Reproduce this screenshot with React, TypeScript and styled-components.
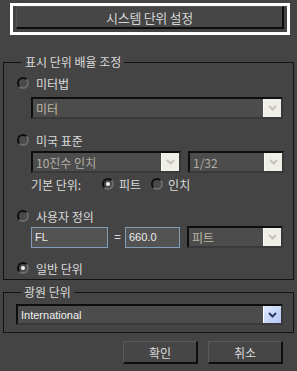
import React from 'react'
import styled, { createGlobalStyle } from 'styled-components'

const GlobalStyle = createGlobalStyle`
  html, body {
    margin: 0;
    padding: 0;
    background: #444444;
  }
  body {
    font-family: "Noto Sans CJK KR", "Liberation Sans", sans-serif;
    font-size: 12px;
    color: #dadada;
  }
`

type SelectProps = {
  value: string
  width?: number
  tone?: 'beige' | 'muted' | 'light'
  active?: boolean
}

const Select: React.FC<SelectProps> = ({ value, width, tone = 'muted', active }) => (
  <SelectBox $width={width}>
    <SelectText $tone={tone}>{value}</SelectText>
    <ArrowButton $active={active}>
      <svg width="9" height="6" viewBox="0 0 9 6">
        <path
          d="M1 1 L4.5 4.5 L8 1"
          fill="none"
          stroke={active ? '#2b3a66' : '#c4c4bc'}
          strokeWidth="2"
        />
      </svg>
    </ArrowButton>
  </SelectBox>
)

const RadioOption: React.FC<{ checked?: boolean; children: React.ReactNode }> = ({
  checked,
  children,
}) => (
  <RadioRow>
    <Radio $checked={checked} />
    <span>{children}</span>
  </RadioRow>
)

const App: React.FC = () => {
  return (
    <Page>
      <GlobalStyle />
      <TopFrame>
        <TopButton>시스템 단위 설정</TopButton>
      </TopFrame>

      <Group>
        <Legend>표시 단위 배율 조정</Legend>

        <RadioOption>미터법</RadioOption>
        <Indent $top={5}>
          <Select value="미터" tone="beige" />
        </Indent>

        <Spacer $h={12} />
        <RadioOption>미국 표준</RadioOption>
        <Indent $top={2}>
          <Select value="10진수 인치" width={150} />
          <Select value="1/32" width={96} />
        </Indent>
        <BaseUnitRow>
          <span>기본 단위:</span>
          <InlineRadio>
            <Radio $checked />
            <span>피트</span>
          </InlineRadio>
          <InlineRadio>
            <Radio />
            <span>인치</span>
          </InlineRadio>
        </BaseUnitRow>

        <Spacer $h={14} />
        <RadioOption>사용자 정의</RadioOption>
        <Indent $top={1}>
          <Edit $width={77}>FL</Edit>
          <Equals>=</Equals>
          <Edit $width={55}>660.0</Edit>
          <Select value="피트" width={96} tone="beige" />
        </Indent>

        <Spacer $h={11} />
        <RadioOption checked>일반 단위</RadioOption>
      </Group>

      <LightGroup>
        <Legend>광원 단위</Legend>
        <LightRow>
          <Select value="International" tone="light" active />
        </LightRow>
      </LightGroup>

      <Footer>
        <DialogButton>확인</DialogButton>
        <DialogButton>취소</DialogButton>
      </Footer>
    </Page>
  )
}

export default App

const Page = styled.div`
  width: 297px;
  height: 371px;
  box-sizing: border-box;
  display: flex;
  flex-direction: column;
  overflow: hidden;
`

const TopFrame = styled.div`
  margin: 3px 0 0 10px;
  width: 280px;
  height: 32px;
  box-sizing: border-box;
  border: 3px solid #ffffff;
  padding: 0 3px;
`

const TopButton = styled.div`
  height: 23px;
  box-sizing: border-box;
  border-top: 1px solid #555555;
  border-left: 1px solid #555555;
  border-right: 2px solid #0c0c0c;
  border-bottom: 2px solid #0c0c0c;
  background: #464646;
  display: flex;
  align-items: center;
  justify-content: center;
  font-size: 13px;
  color: #d4d4d4;
  letter-spacing: -0.3px;
`

const Group = styled.fieldset`
  margin: 19px 0 0 3px;
  width: 291px;
  box-sizing: border-box;
  border: 1px solid #121212;
  padding: 0 10px 2px 13px;
  display: flex;
  flex-direction: column;
  min-width: 0;
`

const LightGroup = styled(Group)`
  margin-top: 4px;
  padding: 0 10px 7px 12px;
`

const Legend = styled.legend`
  margin-left: 5px;
  padding: 0 3px;
  height: 16px;
  line-height: 16px;
  color: #dadada;
`

const Spacer = styled.div<{ $h: number }>`
  height: ${(p) => p.$h}px;
  flex: none;
`

const RadioRow = styled.div`
  margin-top: 4px;
  height: 18px;
  display: flex;
  align-items: center;
  gap: 7px;
  ${Spacer} + & {
    margin-top: 0;
  }
`

const Radio = styled.span<{ $checked?: boolean }>`
  position: relative;
  width: 12px;
  height: 12px;
  box-sizing: border-box;
  border-radius: 50%;
  border: 2px solid;
  border-color: #0e0e0e #6a6a6a #6a6a6a #0e0e0e;
  background: #4a4a4a;
  flex: none;

  &::after {
    content: '';
    display: ${(p) => (p.$checked ? 'block' : 'none')};
    position: absolute;
    left: 2px;
    top: 2px;
    width: 4px;
    height: 4px;
    border-radius: 50%;
    background: #f4f4f4;
  }
`

const Indent = styled.div<{ $top: number }>`
  margin: ${(p) => p.$top}px 0 0 14px;
  display: flex;
  align-items: center;
  gap: 7px;
`

const SelectBox = styled.div<{ $width?: number }>`
  ${(p) => (p.$width ? `width: ${p.$width}px; flex: none;` : 'flex: 1;')}
  height: 22px;
  box-sizing: border-box;
  border-top: 2px solid #0e0e0e;
  border-left: 2px solid #0e0e0e;
  border-right: 2px solid #393939;
  border-bottom: 2px solid #393939;
  background: #4c4c4c;
  display: flex;
  align-items: stretch;
`

const toneColors = {
  beige: '#bdb7a4',
  muted: '#b0ada4',
  light: '#f0f0f0',
}

const SelectText = styled.span<{ $tone: 'beige' | 'muted' | 'light' }>`
  flex: 1;
  padding-left: 3px;
  display: flex;
  align-items: center;
  color: ${(p) => toneColors[p.$tone]};
  font-family: ${(p) =>
    p.$tone === 'light' ? '"Liberation Sans", "Noto Sans CJK KR", sans-serif' : 'inherit'};
  font-size: ${(p) => (p.$tone === 'light' ? '11px' : '12px')};
  white-space: nowrap;
  overflow: hidden;
`

const ArrowButton = styled.span<{ $active?: boolean }>`
  width: 17px;
  flex: none;
  display: flex;
  align-items: center;
  justify-content: center;
  background: ${(p) =>
    p.$active ? 'linear-gradient(135deg, #dfe8ff, #b4c8f4)' : '#efefe8'};
  border-left: 1px solid ${(p) => (p.$active ? '#ffffff' : '#fbfbf6')};
`

const BaseUnitRow = styled.div`
  margin: 2px 0 0 14px;
  height: 18px;
  display: flex;
  align-items: center;

  & > span:first-child {
    width: 71px;
  }
`

const InlineRadio = styled.div`
  display: flex;
  align-items: center;
  gap: 5px;
  margin-right: 10px;
`

const Edit = styled.div<{ $width: number }>`
  width: ${(p) => p.$width}px;
  height: 21px;
  box-sizing: border-box;
  flex: none;
  border: 1px solid #7f9db9;
  background: #535353;
  color: #ececec;
  font-family: "Liberation Sans", sans-serif;
  font-size: 11px;
  padding-left: 3px;
  display: flex;
  align-items: center;
`

const Equals = styled.span`
  width: 5px;
  margin: 0 -1px;
  text-align: center;
  font-family: "Liberation Sans", sans-serif;
`

const LightRow = styled.div`
  margin-top: 4px;
  display: flex;

  & > div {
    height: 21px;
  }
`

const Footer = styled.div`
  margin-top: 8px;
  padding-right: 14px;
  display: flex;
  justify-content: flex-end;
  gap: 10px;
`

const DialogButton = styled.div`
  width: 75px;
  height: 23px;
  box-sizing: border-box;
  border-top: 1px solid #5a5a5a;
  border-left: 1px solid #5a5a5a;
  border-right: 2px solid #0e0e0e;
  border-bottom: 2px solid #0e0e0e;
  background: #464646;
  display: flex;
  align-items: center;
  justify-content: center;
  color: #dadada;
`
